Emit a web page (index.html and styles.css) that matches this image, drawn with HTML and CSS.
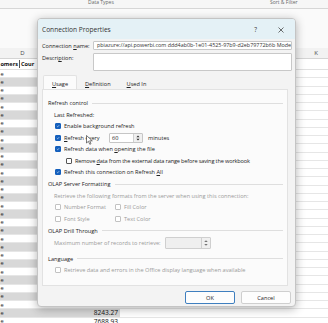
FILE: index.html
```html
<!DOCTYPE html>
<html lang="en">
<head>
    <meta charset="UTF-8">
    <meta name="viewport" content="width=device-width, initial-scale=1.0">
    <title>Connection Properties</title>
    <link rel="stylesheet" href="styles.css">
</head>
<body>
    <div class="sheet">
        <div class="ribbon">
            <span class="group-label types">Data Types</span>
            <span class="group-label sort">Sort &amp; Filter</span>
        </div>
        <div class="blank"></div>
        <div class="col-heads">
            <span class="col-d">D</span>
            <span class="col-k">K</span>
        </div>
        <div class="head-row">
            <span class="head-a">omers</span><span class="head-b">Cour</span>
        </div>
        <div class="rows">
            <div class="row"><span class="cell-a">e</span><span class="cell-b"></span></div>
            <div class="row"><span class="cell-a">e</span><span class="cell-b"></span></div>
            <div class="row"><span class="cell-a">e</span><span class="cell-b"></span></div>
            <div class="row"><span class="cell-a">e</span><span class="cell-b"></span></div>
            <div class="row"><span class="cell-a">e</span><span class="cell-b"></span></div>
            <div class="row"><span class="cell-a">e</span><span class="cell-b"></span></div>
            <div class="row"><span class="cell-a">e</span><span class="cell-b"></span></div>
            <div class="row"><span class="cell-a">e</span><span class="cell-b"></span></div>
            <div class="row"><span class="cell-a">e</span><span class="cell-b"></span></div>
            <div class="row"><span class="cell-a">e</span><span class="cell-b"></span></div>
            <div class="row"><span class="cell-a">e</span><span class="cell-b"></span></div>
            <div class="row"><span class="cell-a">e</span><span class="cell-b"></span></div>
            <div class="row"><span class="cell-a">e</span><span class="cell-b"></span></div>
            <div class="row"><span class="cell-a">e</span><span class="cell-b"></span></div>
            <div class="row"><span class="cell-a">e</span><span class="cell-b"></span></div>
            <div class="row"><span class="cell-a">e</span><span class="cell-b"></span></div>
            <div class="row"><span class="cell-a">e</span><span class="cell-b"></span></div>
            <div class="row"><span class="cell-a">e</span><span class="cell-b"></span></div>
            <div class="row"><span class="cell-a">e</span><span class="cell-b"></span></div>
            <div class="row"><span class="cell-a">e</span><span class="cell-b"></span></div>
            <div class="row"><span class="cell-a">e</span><span class="cell-b"></span></div>
            <div class="row"><span class="cell-a">e</span><span class="cell-b"></span></div>
            <div class="row"><span class="cell-a">e</span><span class="cell-b"></span></div>
            <div class="row"><span class="cell-a">e</span><span class="cell-b"></span></div>
            <div class="row"><span class="cell-a">e</span><span class="cell-b"></span></div>
            <div class="row"><span class="cell-a">e</span><span class="cell-b"></span></div>
            <div class="row"><span class="cell-a">e</span><span class="cell-b"></span></div>
            <div class="row"><span class="cell-a">e</span><span class="cell-b"></span></div>
            <div class="row"><span class="cell-a">e</span><span class="cell-b"></span></div>
            <div class="row"><span class="cell-a">e</span><span class="cell-b">8243.27</span></div>
            <div class="row"><span class="cell-a">e</span><span class="cell-b">7688.93</span></div>
        </div>
    </div>

    <div class="dialog">
        <div class="titlebar">
            <span class="title">Connection Properties</span>
            <span class="help">?</span>
            <svg class="close" width="6" height="6" viewBox="0 0 6 6"><path d="M0.5 0.5L5.5 5.5M5.5 0.5L0.5 5.5" stroke="#333" stroke-width="0.7"/></svg>
        </div>
        <div class="dialog-body">
            <div class="field">
                <span class="field-label">Connection <u>n</u>ame:</span>
                <div class="input">pbiazure://api.powerbi.com ddd4ab0b-1e01-4525-97b9-d2eb79772b6b Model</div>
            </div>
            <div class="field desc">
                <span class="field-label">Descri<u>p</u>tion:</span>
                <div class="input textarea"></div>
            </div>
            <div class="tabs">
                <span class="tab active"><span><u>U</u>sage</span></span>
                <span class="tab"><span><u>D</u>efinition</span></span>
                <span class="tab"><span><u>U</u>sed In</span></span>
            </div>
            <div class="panel">
                <div class="legend"><span>Refresh control</span><i></i></div>
                <div class="opt"><span>Last Refreshed:</span></div>
                <div class="opt"><span class="cb on"><svg viewBox="0 0 6 6"><path d="M1.2 3.1L2.5 4.3L4.8 1.7" fill="none" stroke="#fff" stroke-width="0.8"/></svg></span><span>Enable background refresh</span></div>
                <div class="opt"><span class="cb on"><svg viewBox="0 0 6 6"><path d="M1.2 3.1L2.5 4.3L4.8 1.7" fill="none" stroke="#fff" stroke-width="0.8"/></svg></span><span class="every"><u>R</u>efresh every</span>
                    <span class="spin"><span class="spin-val">60</span><span class="spin-btns"><svg viewBox="0 0 9 10"><path d="M2.5 4L4.5 2L6.5 4Z M2.5 6L4.5 8L6.5 6Z" fill="#333"/></svg></span></span>
                    <span class="unit">minutes</span>
                </div>
                <div class="opt"><span class="cb on"><svg viewBox="0 0 6 6"><path d="M1.2 3.1L2.5 4.3L4.8 1.7" fill="none" stroke="#fff" stroke-width="0.8"/></svg></span><span>Refresh data when <u>o</u>pening the file</span></div>
                <div class="opt sub"><span class="cb"></span><span>Remove <u>d</u>ata from the external data range before saving the workbook</span></div>
                <div class="opt"><span class="cb on"><svg viewBox="0 0 6 6"><path d="M1.2 3.1L2.5 4.3L4.8 1.7" fill="none" stroke="#fff" stroke-width="0.8"/></svg></span><span>Refresh this connection on Refresh <u>A</u>ll</span></div>

                <div class="legend"><span>OLAP Server Formatting</span><i></i></div>
                <div class="opt off"><span>Retrieve the following formats from the server when using this connection:</span></div>
                <div class="formats">
                    <div class="opt off"><span class="cb"></span><span>Number Format</span></div>
                    <div class="opt off"><span class="cb"></span><span>Fill Color</span></div>
                    <div class="opt off"><span class="cb"></span><span>Font Style</span></div>
                    <div class="opt off"><span class="cb"></span><span>Text Color</span></div>
                </div>

                <div class="legend"><span>OLAP Drill Through</span><i></i></div>
                <div class="opt off max"><span>Maximum number of records to retrieve:</span>
                    <span class="spin wide"><span class="spin-val"></span><span class="spin-btns"><svg viewBox="0 0 9 10"><path d="M2.5 4L4.5 2L6.5 4Z M2.5 6L4.5 8L6.5 6Z" fill="#777"/></svg></span></span>
                </div>

                <div class="legend lang"><span>Language</span><i></i></div>
                <div class="opt off"><span class="cb"></span><span>Retrieve data and errors in the Office display language when available</span></div>
            </div>
            <div class="buttons">
                <span class="btn default">OK</span>
                <span class="btn">Cancel</span>
            </div>
        </div>
        <svg class="cursor" width="8" height="10" viewBox="0 0 8 10"><path d="M0.5 0.5L0.5 8L2.4 6.3L3.8 9.3L5 8.7L3.7 5.8L6.3 5.8Z" fill="#fff" stroke="#222" stroke-width="0.6"/></svg>
    </div>
</body>
</html>
```

FILE: styles.css
```css
* {
    box-sizing: border-box;
}
body {
    margin: 0;
    width: 328px;
    height: 323px;
    overflow: hidden;
    position: relative;
    font-family: "Open Sans", "Noto Sans", sans-serif;
    font-size: 5.6px;
    color: #222;
    background: #fff;
}
u {
    text-decoration-thickness: 0.5px;
    text-underline-offset: 1px;
}

/* spreadsheet behind the dialog */
.ribbon {
    height: 9px;
    background: #f6f6f6;
    border-bottom: 1px solid #d6d6d6;
    position: relative;
    color: #666;
    font-size: 5px;
}
.group-label {
    position: absolute;
    top: -1px;
}
.group-label.types { left: 88px; }
.group-label.sort { left: 270px; }
.blank {
    height: 39px;
    background: #fafafa;
}
.col-heads {
    height: 11px;
    background: #f2f2f2;
    border-bottom: 1px solid #d4d4d4;
    display: flex;
    align-items: center;
    color: #444;
    font-size: 6px;
}
.col-d {
    width: 45px;
    text-align: center;
}
.col-k {
    margin-left: auto;
    width: 24px;
    text-align: center;
}
.head-row {
    height: 11px;
    display: flex;
    align-items: center;
    font-weight: 700;
    color: #111;
    border-bottom: 1px solid #e0e0e0;
}
.head-a {
    width: 20px;
    overflow: hidden;
    text-align: right;
    padding-right: 1px;
    border-right: 1px solid #555;
}
.head-b {
    padding-left: 1px;
}
.row {
    height: 8.25px;
    display: flex;
    align-items: center;
    border-bottom: 1px solid #e6e6e6;
}
.row:nth-child(even) .cell-a,
.row:nth-child(even) .cell-b {
    background: #d8d8d8;
}
.cell-a {
    width: 38px;
    height: 100%;
    display: flex;
    align-items: center;
    padding-left: 0.5px;
}
.cell-b {
    width: 82px;
    height: 100%;
    display: flex;
    align-items: center;
    justify-content: flex-end;
    padding-right: 2px;
    font-size: 6.6px;
    color: #111;
}

/* dialog */
.dialog {
    position: absolute;
    left: 37px;
    top: 18px;
    width: 259px;
    height: 289px;
    background: #f3f3f3;
    border: 1px solid #c4c4c4;
    border-radius: 4px;
    box-shadow: 0 2px 10px rgba(0, 0, 0, 0.3);
    overflow: hidden;
}
.titlebar {
    height: 20px;
    background: #e4f1f6;
    display: flex;
    align-items: center;
    padding-left: 4px;
    padding-top: 1px;
}
.title {
    font-size: 6.6px;
    color: #333;
}
.help {
    margin-left: auto;
    font-size: 6.4px;
    color: #333;
}
.close {
    margin-left: 21px;
    margin-right: 11px;
}
.dialog-body {
    padding: 0 3px 0 4px;
}
.field {
    display: flex;
    align-items: center;
    margin-top: 2px;
}
.field.desc {
    align-items: flex-start;
    margin-top: 3px;
}
.field-label {
    width: 51px;
    flex-shrink: 0;
}
.field.desc .field-label {
    padding-top: 1px;
}
.input {
    flex: 1;
    height: 9px;
    background: #fff;
    border: 1px solid #c8c8c8;
    border-radius: 1px;
    padding-left: 3px;
    line-height: 7px;
    white-space: nowrap;
    overflow: hidden;
    font-size: 5.4px;
    color: #333;
}
.input.textarea {
    height: 18px;
}
.tabs {
    margin: 2px -3px 0 -4px;
    height: 16px;
    display: flex;
    align-items: flex-end;
    padding-left: 5px;
}
.tab {
    height: 14px;
    padding: 0 8px;
    display: flex;
    align-items: center;
    padding-top: 3px;
}
.tab.active {
    background: #fbfbfb;
    border: 1px solid #e2e2e2;
    border-bottom: none;
    border-radius: 2px 2px 0 0;
}
.panel {
    margin-right: 4px;
    height: 197px;
    background: #fbfbfb;
    border: 1px solid #e2e2e2;
    padding: 7px 4px 0 5px;
}
.legend {
    height: 12px;
    display: flex;
    align-items: center;
}
.legend i {
    flex: 1;
    border-top: 1px solid #dedede;
    margin-left: 4px;
}
.legend.lang {
    margin-top: 3px;
}
.opt {
    height: 11.5px;
    display: flex;
    align-items: center;
    padding-left: 6px;
    white-space: nowrap;
}
.opt.sub {
    padding-left: 17px;
    letter-spacing: -0.15px;
}
.opt.off {
    color: #9a9a9a;
}
.opt.max {
    height: 13px;
}
.cb {
    width: 6px;
    height: 6px;
    margin: 0 3px 0 1px;
    border: 0.6px solid #555;
    border-radius: 1px;
    background: #fff;
    flex-shrink: 0;
    display: flex;
}
.cb.on {
    background: #1560bd;
    border-color: #1560bd;
}
.cb svg {
    width: 100%;
    height: 100%;
}
.opt.off .cb {
    border-color: #c2c2c2;
}
.every {
    width: 45px;
}
.spin {
    width: 34px;
    height: 10px;
    display: flex;
    background: #fff;
    border: 1px solid #c6c6c6;
    border-radius: 1px;
    color: #222;
}
.spin-val {
    flex: 1;
    padding-left: 2px;
    display: flex;
    align-items: center;
}
.spin-btns {
    width: 9px;
    background: #f0f0f0;
    border-left: 1px solid #d0d0d0;
    display: flex;
}
.spin-btns svg {
    width: 100%;
    height: 100%;
}
.unit {
    margin-left: 5px;
}
.spin.wide {
    width: 46px;
    height: 12px;
    margin-left: 4px;
    background: #efefef;
    border-color: #cfcfcf;
}
.formats {
    display: grid;
    grid-template-columns: 60px auto;
}
.buttons {
    display: flex;
    justify-content: flex-end;
    gap: 6px;
    margin-top: 5px;
    padding-right: 1px;
}
.btn {
    width: 50px;
    height: 13px;
    background: #fdfdfd;
    border: 1px solid #cfcfcf;
    border-radius: 2px;
    display: flex;
    align-items: center;
    justify-content: center;
    color: #222;
}
.btn.default {
    border-color: #3f7fbf;
}
.cursor {
    position: absolute;
    left: 48px;
    top: 116px;
}
```
